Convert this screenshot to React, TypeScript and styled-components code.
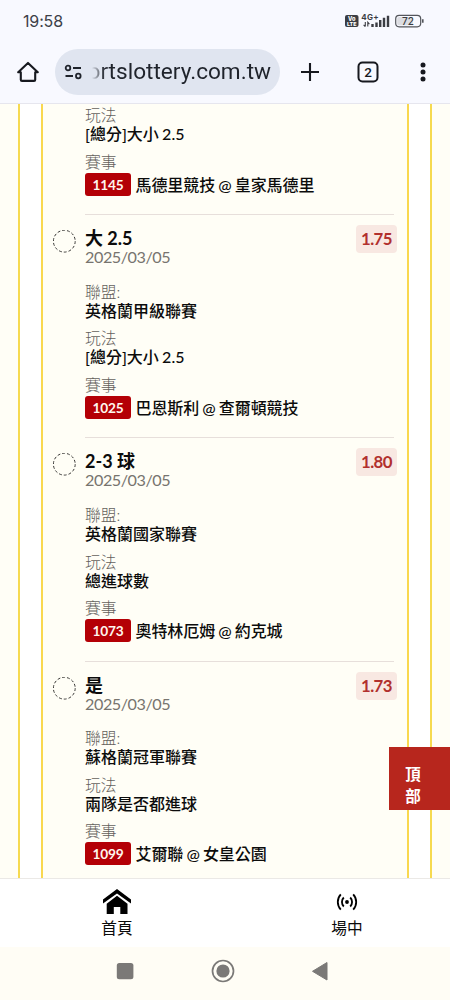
import React from 'react';
import styled, { createGlobalStyle } from 'styled-components';

const GlobalStyle = createGlobalStyle`
  * { box-sizing: border-box; }
  body { margin: 0; background: #fffdf5; font-family: Lato, "Noto Sans CJK TC", sans-serif; }
`;

const Screen = styled.div`
  width: 450px;
  height: 1000px;
  display: flex;
  flex-direction: column;
  overflow: hidden;
  position: relative;
  background: #fffef6;
`;

const BrowserHeader = styled.header`
  height: 104px;
  flex: none;
  background: #f8f9ff;
  border-bottom: 1px solid #e6e6ee;
`;

const StatusBar = styled.div`
  height: 42px;
  padding: 0 25px 0 23px;
  display: flex;
  align-items: center;
  justify-content: space-between;
`;

const Clock = styled.span`
  font: 400 16px/20px Inter, sans-serif;
  letter-spacing: -0.15px;
  color: #3d4048;
`;

const AddressRow = styled.div`
  height: 59px;
  display: flex;
  align-items: center;
`;

const IconSlot = styled.div<{ $width: number }>`
  width: ${(p) => p.$width}px;
  flex: none;
  display: flex;
  align-items: center;
  justify-content: center;
`;

const AddressPill = styled.div`
  width: 225px;
  height: 46px;
  flex: none;
  display: flex;
  align-items: center;
  padding-left: 9px;
  border-radius: 23px;
  background: #e0e5f0;
`;

const UrlWindow = styled.div`
  width: 188px;
  height: 36px;
  display: flex;
  justify-content: flex-end;
  overflow: hidden;
  mask-image: linear-gradient(to right, transparent 9px, #000 22px);
`;

const Url = styled.span`
  flex: none;
  font: 400 22.6px/35px Roboto, sans-serif;
  color: #1f232b;
`;

const Content = styled.main`
  height: 774px;
  flex: none;
  padding: 0 18px;
  overflow: hidden;
`;

const OuterFrame = styled.div`
  height: 100%;
  padding: 0 21px;
  background: #fff;
  border: solid #f6da50;
  border-width: 0 2px;
`;

const Slip = styled.div`
  height: 100%;
  overflow: hidden;
  padding: 1px 13px 0 10px;
  background: #fffef6;
  border: solid #f9d84f;
  border-width: 0 2px;
`;

const Bet = styled.section<{ $partial?: boolean }>`
  display: flex;
  align-items: flex-start;
  height: ${(p) => (p.$partial ? '110.2px' : '223.2px')};
  padding-top: ${(p) => (p.$partial ? '0.3px' : '13px')};
`;

const CheckSlot = styled.div`
  width: 32px;
  flex: none;
  padding-top: 2px;
`;

const BetBody = styled.div`
  flex: 1;
  height: 100%;
  min-width: 0;
  border-bottom: 1px solid #e7dfdb;
`;

const LastBody = styled(BetBody)`
  border-bottom: none;
`;

const BetHead = styled.div`
  height: 53.6px;
  display: flex;
  align-items: flex-start;
  justify-content: space-between;
`;

const Title = styled.h2`
  margin: 0;
  font-size: 18px;
  line-height: 21px;
  font-weight: 700;
  color: #0c0c0c;
`;

const DateText = styled.div`
  font-size: 16.2px;
  line-height: 16px;
  letter-spacing: -0.45px;
  color: #77746f;
`;

const Odds = styled.div`
  width: 41px;
  height: 28px;
  margin: -3px -3px 0 0;
  border-radius: 4px;
  background: #f8e8e2;
  color: #b1302d;
  font-size: 16.8px;
  line-height: 28px;
  letter-spacing: -0.5px;
  font-weight: 700;
  text-align: center;
`;

const Field = styled.div`
  margin-bottom: 8.6px;
`;

const Label = styled.div`
  font-size: 15.8px;
  line-height: 19px;
  font-weight: 300;
  color: #64615d;
`;

const Value = styled.div`
  font-size: 16px;
  line-height: 19px;
  font-weight: 500;
  word-spacing: -0.8px;
  color: #0c0c0c;
  white-space: nowrap;
`;

const Match = styled(Value)`
  display: flex;
  align-items: center;
  gap: 4.5px;
  height: 23px;
  margin-top: 1.9px;
`;

const MatchNo = styled.span`
  width: 46px;
  height: 23px;
  border-radius: 3px;
  background: #b40006;
  color: #fff6ee;
  font-size: 13.7px;
  line-height: 23px;
  letter-spacing: -0.2px;
  font-weight: 700;
  text-align: center;
`;

const MatchName = styled.span`
  letter-spacing: -0.08px;
`;

const TopButton = styled.button`
  position: absolute;
  right: 0;
  top: 747px;
  width: 61px;
  height: 63px;
  padding: 16px 13px 0 0;
  border: 0;
  background: #b7261d;
  color: #fff;
  font: 700 15.5px/22px Lato, "Noto Sans CJK TC", sans-serif;
  display: flex;
  flex-direction: column;
  align-items: center;
`;

const TabBar = styled.nav`
  height: 69px;
  flex: none;
  display: flex;
  padding: 0 0 0 2px;
  background: #fff;
  border-top: 1px solid #ebe9e6;
`;

const Tab = styled.a<{ $left: number }>`
  width: 32px;
  margin-left: ${(p) => p.$left}px;
  padding-top: 8px;
  display: flex;
  flex-direction: column;
  align-items: center;
  color: #0a0a0a;
  font-size: 15.7px;
  line-height: 22px;
  white-space: nowrap;
`;

const TabIcon = styled.div`
  height: 30px;
  display: flex;
  align-items: center;
`;

const SystemBar = styled.footer`
  height: 53px;
  flex: none;
  display: flex;
  align-items: flex-start;
  padding: 12px 0 0 113px;
  background: #fffdf5;
`;

const SystemKey = styled.div<{ $gap?: number }>`
  width: 24px;
  height: 24px;
  margin-right: ${(p) => p.$gap ?? 0}px;
`;

interface BetInfo {
  title: string;
  odds: string;
  league: string;
  play: string;
  no: string;
  match: string;
}

const bets: BetInfo[] = [
  { title: '大 2.5', odds: '1.75', league: '英格蘭甲級聯賽', play: '[總分]大小 2.5', no: '1025', match: '巴恩斯利 @ 查爾頓競技' },
  { title: '2-3 球', odds: '1.80', league: '英格蘭國家聯賽', play: '總進球數', no: '1073', match: '奧特林厄姆 @ 約克城' },
  { title: '是', odds: '1.73', league: '蘇格蘭冠軍聯賽', play: '兩隊是否都進球', no: '1099', match: '艾爾聯 @ 女皇公園' },
];

const PlayAndMatch = ({ play, no, match }: Pick<BetInfo, 'play' | 'no' | 'match'>) => (
  <>
    <Field>
      <Label>玩法</Label>
      <Value>{play}</Value>
    </Field>
    <Label>賽事</Label>
    <Match>
      <MatchNo>{no}</MatchNo>
      <MatchName>{match}</MatchName>
    </Match>
  </>
);

const DashedCircle = () => (
  <svg width="23" height="23" viewBox="0 0 23 23" fill="none" style={{ display: 'block' }}>
    <circle cx="11.3" cy="11.2" r="10.9" stroke="#3a3937" strokeWidth="1" strokeDasharray="2.9 1.99" />
  </svg>
);

const StatusIcons = () => (
  <svg width="80" height="16" viewBox="0 0 80 16" fontFamily="Inter, sans-serif">
    <rect x="0" y="2" width="13.5" height="12" rx="2" fill="#3b3d43" />
    <text x="6.8" y="7.6" fontSize="5.6" fontWeight="800" fill="#fff" textAnchor="middle">Vo</text>
    <text x="6.8" y="12.9" fontSize="5.4" fontWeight="800" fill="#fff" textAnchor="middle">LTE</text>
    <text x="16.3" y="6.8" fontSize="8" fontWeight="700" fill="#3b3d43" textLength="17.5">4G+</text>
    <path d="M20.3 9v4.5M18.6 11.8l1.7 1.7M22.8 13.5V9.3l1.6 1.8" stroke="#3b3d43" strokeWidth="1.1" fill="none" />
    <path d="M27.5 11v3M31.5 9.5V14M35.2 7V14M39 4.8V14M43 2.8V14" stroke="#3b3d43" strokeWidth="2.4" />
    <rect x="50.7" y="2.4" width="25" height="11.4" rx="3.5" fill="#f8f9ff" stroke="#53555b" strokeWidth="1.2" />
    <path d="M54 4h14v8.2H54a1.8 1.8 0 0 1-1.8-1.8V5.8A1.8 1.8 0 0 1 54 4z" fill="#dcdde2" />
    <path d="M77.8 6.2v3.6" stroke="#53555b" strokeWidth="1.6" />
    <text x="63" y="11.7" fontSize="10" fontWeight="500" fill="#3b3d43" textAnchor="middle">72</text>
  </svg>
);

export default function App() {
  return (
    <>
      <GlobalStyle />
      <Screen>
        <BrowserHeader>
          <StatusBar>
            <Clock>19:58</Clock>
            <StatusIcons />
          </StatusBar>
          <AddressRow>
            <IconSlot $width={55}>
              <svg width="22" height="22" viewBox="0 0 22 22" fill="none" stroke="#17191f" strokeWidth="2.1" strokeLinejoin="round">
                <path d="M3.8 11.2V18.7q0 1.2 1.2 1.2h12q1.2 0 1.2-1.2V11.2h2.6L11 1.9 1.2 11.2z" />
              </svg>
            </IconSlot>
            <AddressPill>
              <svg width="19" height="16" viewBox="0 0 19 16" fill="none" stroke="#1f232b" strokeWidth="1.8">
                <circle cx="4" cy="4" r="2.3" />
                <path d="M9 4h8M1.5 12h7.5" />
                <circle cx="14.3" cy="12" r="2.3" />
              </svg>
              <UrlWindow>
                <Url>ortslottery.com.tw</Url>
              </UrlWindow>
            </AddressPill>
            <IconSlot $width={60}>
              <svg width="20" height="20" viewBox="0 0 20 20" stroke="#17191f" strokeWidth="2.1">
                <path d="M10 1v18M1 10h18" />
              </svg>
            </IconSlot>
            <IconSlot $width={55}>
              <svg width="22" height="22" viewBox="0 0 22 22">
                <rect x="1.5" y="1.5" width="19" height="19" rx="4" fill="none" stroke="#17191f" strokeWidth="2" />
                <text x="11" y="15.7" textAnchor="middle" fontSize="13.5" fontWeight="500" fontFamily="Roboto, sans-serif" fill="#17191f">2</text>
              </svg>
            </IconSlot>
            <IconSlot $width={55}>
              <svg width="6" height="20" viewBox="0 0 6 20" fill="#17191f">
                <circle cx="3" cy="3" r="2.5" />
                <circle cx="3" cy="10" r="2.5" />
                <circle cx="3" cy="17" r="2.5" />
              </svg>
            </IconSlot>
          </AddressRow>
        </BrowserHeader>

        <Content>
          <OuterFrame>
            <Slip>
              <Bet $partial>
                <CheckSlot />
                <BetBody>
                  <PlayAndMatch play="[總分]大小 2.5" no="1145" match="馬德里競技 @ 皇家馬德里" />
                </BetBody>
              </Bet>
              {bets.map((bet, i) => {
                const Body = i === bets.length - 1 ? LastBody : BetBody;
                return (
                  <Bet key={bet.no}>
                    <CheckSlot>
                      <DashedCircle />
                    </CheckSlot>
                    <Body>
                      <BetHead>
                        <div>
                          <Title>{bet.title}</Title>
                          <DateText>2025/03/05</DateText>
                        </div>
                        <Odds>{bet.odds}</Odds>
                      </BetHead>
                      <Field>
                        <Label>聯盟:</Label>
                        <Value>{bet.league}</Value>
                      </Field>
                      <PlayAndMatch play={bet.play} no={bet.no} match={bet.match} />
                    </Body>
                  </Bet>
                );
              })}
            </Slip>
          </OuterFrame>
        </Content>

        <TopButton>
          <span>頂</span>
          <span>部</span>
        </TopButton>

        <TabBar>
          <Tab $left={99}>
            <TabIcon>
              <svg width="28" height="26" viewBox="0 0 28 26" fill="#000">
                <path d="M14 0 28 10.5v4L14 4.5 0 14.5v-4z" />
                <path d="M14 6.7l10.5 8V25H17.3v-7h-6.5v7H3.7V14.7z" />
              </svg>
            </TabIcon>
            首頁
          </Tab>
          <Tab $left={198}>
            <TabIcon>
              <svg width="22" height="18" viewBox="0 0 22 18" fill="none" stroke="#000" strokeWidth="1.8">
                <circle cx="11" cy="9" r="1.9" fill="#000" stroke="none" />
                <path d="M4.800 1.300c-4 4.300-4 11.100 0 15.400M17.200 1.300c4 4.300 4 11.100 0 15.400M7.800 4.500c-2.500 2.500-2.500 6.500 0 9M14.200 4.500c2.500 2.500 2.500 6.500 0 9" />
              </svg>
            </TabIcon>
            場中
          </Tab>
        </TabBar>

        <SystemBar>
          <SystemKey $gap={74}>
            <svg width="24" height="24" viewBox="0 0 24 24">
              <rect x="3.8" y="4" width="16.6" height="16.3" rx="2.5" fill="#7b7977" />
            </svg>
          </SystemKey>
          <SystemKey $gap={73}>
            <svg width="24" height="24" viewBox="0 0 24 24">
              <circle cx="12" cy="12" r="10.5" fill="none" stroke="#7b7977" strokeWidth="1.7" />
              <circle cx="12" cy="12" r="6.6" fill="#7b7977" />
            </svg>
          </SystemKey>
          <SystemKey>
            <svg width="24" height="24" viewBox="0 0 24 24">
              <path d="M19 3.5v17.5L4.5 12.3z" fill="#7b7977" stroke="#7b7977" strokeWidth="1" strokeLinejoin="round" />
            </svg>
          </SystemKey>
        </SystemBar>
      </Screen>
    </>
  );
}
